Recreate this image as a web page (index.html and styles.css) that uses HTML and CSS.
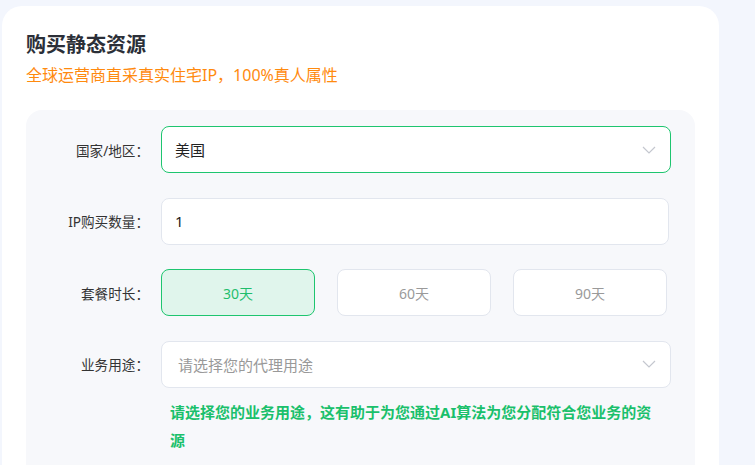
FILE: index.html
```html
<!DOCTYPE html>
<html lang="zh">
<head>
<meta charset="utf-8">
<link rel="stylesheet" href="styles.css">
</head>
<body>
<div class="card">
  <h1 class="title">购买静态资源</h1>
  <p class="subtitle">全球运营商直采真实住宅IP，100%真人属性</p>
  <div class="panel">
    <div class="form">
      <div class="label">国家/地区：</div>
      <div class="field select active">
        <span class="value">美国</span>
        <svg class="chev" width="14" height="8" viewBox="0 0 14 8"><path d="M1 1l6 6 6-6" fill="none" stroke="#c4c7cf" stroke-width="1.2"/></svg>
      </div>

      <div class="label">IP购买数量：</div>
      <div class="field input"><span class="value">1</span></div>

      <div class="label">套餐时长：</div>
      <div class="options">
        <div class="opt selected">30天</div>
        <div class="opt">60天</div>
        <div class="opt">90天</div>
      </div>

      <div class="label">业务用途：</div>
      <div class="field select">
        <span class="placeholder">请选择您的代理用途</span>
        <svg class="chev" width="14" height="8" viewBox="0 0 14 8"><path d="M1 1l6 6 6-6" fill="none" stroke="#c4c7cf" stroke-width="1.2"/></svg>
      </div>

      <div></div>
      <p class="hint">请选择您的业务用途，这有助于为您通过AI算法为您分配符合您业务的资源</p>
    </div>
  </div>
</div>
</body>
</html>
```

FILE: styles.css
```css
* { box-sizing: border-box; }
html, body { margin: 0; padding: 0; }
body {
  background: #f3f6fd;
  font-family: "Noto Sans", "Noto Sans CJK SC", sans-serif;
  color: #333;
  height: 465px;
  overflow: hidden;
}
.card {
  margin: 6px 0 0 2px;
  width: 717px;
  height: 459px;
  background: #fff;
  border-radius: 20px 20px 0 0;
  padding: 25px 24px 0 24px;
  overflow: hidden;
}
.title {
  margin: 0;
  font-size: 20px;
  line-height: 28px;
  font-weight: 700;
  color: #2b2f38;
}
.subtitle {
  margin: 5px 0 0 0;
  font-size: 16px;
  line-height: 22px;
  color: #ff8a0e;
}
.panel {
  margin-top: 24px;
  background: #f7f8fb;
  border-radius: 16px 16px 0 0;
  padding: 16px 24px 0 0;
  height: 360px;
}
.form {
  display: grid;
  grid-template-columns: 123px 510px;
  column-gap: 12px;
  row-gap: 24.5px;
  align-items: center;
}
.label {
  text-align: right;
  font-size: 13.6px;
  color: #333;
  white-space: nowrap;
}
.field {
  height: 47px;
  background: #fff;
  border: 1px solid #e2e6ee;
  border-radius: 8px;
  display: flex;
  align-items: center;
  justify-content: space-between;
  padding: 0 14px 0 13px;
  font-size: 15px;
}
.field.input { width: 508px; }
.field.active { border-color: #1ec56f; }
.value { color: #222; }
.placeholder { color: #999; padding-left: 3px; }
.options {
  display: flex;
  gap: 22px;
}
.opt {
  width: 154px;
  height: 47px;
  border: 1px solid #e2e6ee;
  border-radius: 8px;
  background: #fff;
  display: flex;
  align-items: center;
  justify-content: center;
  font-size: 14px;
  color: #9a9a9a;
}
.opt.selected {
  background: #e0f5ec;
  border-color: #1ec56f;
  color: #1fbe6c;
}
.hint {
  margin: -14.5px 0 0 0;
  padding-left: 9px;
  width: 505px;
  font-size: 15px;
  line-height: 28px;
  font-weight: 700;
  color: #1ac06b;
}
```
